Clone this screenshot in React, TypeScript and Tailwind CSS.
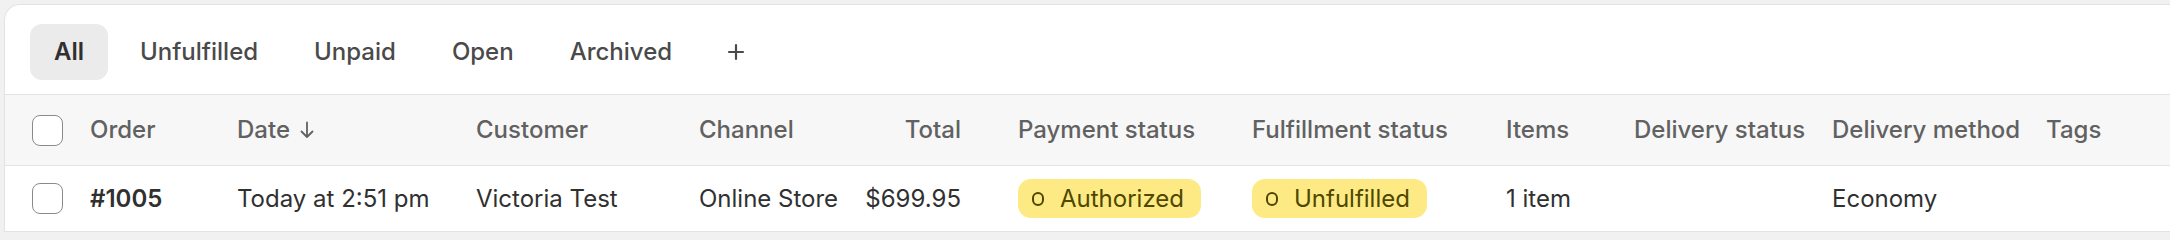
import { Plus } from "lucide-react";

const tabs = ["All", "Unfulfilled", "Unpaid", "Open", "Archived"];

function Checkbox() {
  return <span className="block h-[31px] w-[31px] rounded-[8px] border-[1.5px] border-[#8a8a8a] bg-white" />;
}

function PendingBadge({ label }: { label: string }) {
  return (
    <span className="inline-flex h-[39px] items-center gap-[16px] rounded-[13px] bg-[#fdea84] pl-[14px] pr-[17px] text-[#4f4700]">
      <svg width="12" height="14" viewBox="0 0 12 14" fill="none">
        <rect x="1" y="1" width="10" height="12" rx="5" stroke="currentColor" strokeWidth="2" />
      </svg>
      <span>{label}</span>
    </span>
  );
}

const rowGrid =
  "grid grid-cols-[85px_147px_239px_223px_150px_169px_234px_254px_128px_198px_214px_1fr] items-center";

export default function App() {
  return (
    <div className="min-h-[240px] bg-[#f1f1f1] pl-1 pt-1 font-['Inter',sans-serif] text-[24px] leading-[32px] text-[#303030]">
      <div className="overflow-hidden rounded-tl-[16px] border-l border-t border-[#e3e3e3] bg-white">
        <div className="flex gap-2 border-b border-[#e3e3e3] pb-[14px] pl-[25px] pt-[19px]">
          {tabs.map((tab, i) => (
            <button
              key={tab}
              className={
                i === 0
                  ? "h-14 rounded-[12px] bg-[#ebebeb] px-6 font-semibold text-[#303030]"
                  : "h-14 rounded-[12px] px-6 font-medium text-[#4a4a4a]"
              }
            >
              {tab}
            </button>
          ))}
          <button className="flex h-14 w-16 items-center justify-center text-[#4a4a4a]">
            <Plus size={24} strokeWidth={2.2} />
          </button>
        </div>

        <div className={`${rowGrid} h-[71px] border-b border-[#e3e3e3] bg-[#f7f7f7] font-medium text-[#616161]`}>
          <div className="pl-[27px]">
            <Checkbox />
          </div>
          <div>Order</div>
          <div className="flex items-center gap-[10px]">
            Date
            <svg width="14" height="18" viewBox="0 0 14 18" fill="none" stroke="currentColor" strokeWidth="1.8" strokeLinecap="round" strokeLinejoin="round">
              <path d="M7 1.5v14.5M1.5 10.5 7 16l5.5-5.5" />
            </svg>
          </div>
          <div>Customer</div>
          <div>Channel</div>
          <div className="pr-[57px] text-right">Total</div>
          <div>Payment status</div>
          <div>Fulfillment status</div>
          <div>Items</div>
          <div>Delivery status</div>
          <div>Delivery method</div>
          <div>Tags</div>
        </div>

        <div className={`${rowGrid} h-[66px] border-b border-[#e3e3e3]`}>
          <div className="pl-[27px]">
            <Checkbox />
          </div>
          <div className="font-semibold">#1005</div>
          <div>Today at 2:51 pm</div>
          <div>Victoria Test</div>
          <div className="whitespace-nowrap">Online Store</div>
          <div className="pr-[57px] text-right">$699.95</div>
          <div>
            <PendingBadge label="Authorized" />
          </div>
          <div>
            <PendingBadge label="Unfulfilled" />
          </div>
          <div>1 item</div>
          <div />
          <div>Economy</div>
          <div />
        </div>
      </div>
    </div>
  );
}
